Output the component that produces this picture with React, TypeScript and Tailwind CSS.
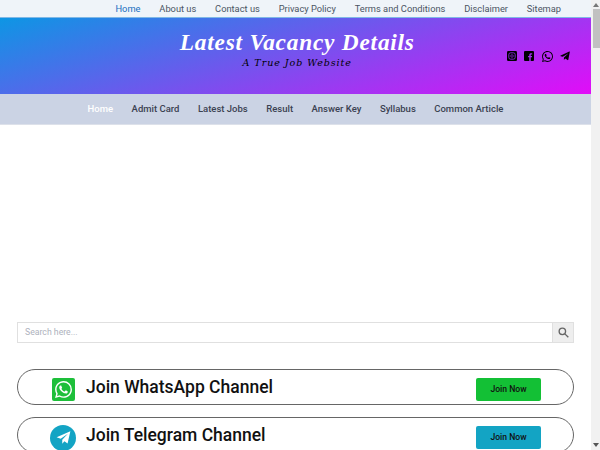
import React from "react";

const top = ["Home", "About us", "Contact us", "Privacy Policy", "Terms and Conditions", "Disclaimer", "Sitemap"];
const nav = ["Home", "Admit Card", "Latest Jobs", "Result", "Answer Key", "Syllabus", "Common Article"];

const WA = "M17.472 14.382c-.297-.149-1.758-.867-2.03-.967-.273-.099-.471-.148-.67.15-.197.297-.767.966-.94 1.164-.173.199-.347.223-.644.075-.297-.15-1.255-.463-2.39-1.475-.883-.788-1.48-1.761-1.653-2.059-.173-.297-.018-.458.13-.606.134-.133.298-.347.446-.52.149-.174.198-.298.298-.497.099-.198.05-.371-.025-.52-.075-.149-.669-1.612-.916-2.207-.242-.579-.487-.5-.669-.51-.173-.008-.371-.01-.57-.01-.198 0-.52.074-.792.372-.272.297-1.04 1.016-1.04 2.479 0 1.462 1.065 2.875 1.213 3.074.149.198 2.096 3.2 5.077 4.487.709.306 1.262.489 1.694.625.712.227 1.36.195 1.871.118.571-.085 1.758-.719 2.006-1.413.248-.694.248-1.289.173-1.413-.074-.124-.272-.198-.57-.347m-5.421 7.403h-.004a9.87 9.87 0 01-5.031-1.378l-.361-.214-3.741.982.998-3.648-.235-.374a9.86 9.86 0 01-1.51-5.26c.001-5.45 4.436-9.884 9.888-9.884 2.64 0 5.122 1.03 6.988 2.898a9.825 9.825 0 012.893 6.994c-.003 5.45-4.437 9.884-9.885 9.884m8.413-18.297A11.815 11.815 0 0012.05 0C5.495 0 .16 5.335.157 11.892c0 2.096.547 4.142 1.588 5.945L.057 24l6.305-1.654a11.882 11.882 0 005.683 1.448h.005c6.554 0 11.89-5.335 11.893-11.893a11.821 11.821 0 00-3.48-8.413z";

function Row({ label, color, icon }: { label: string; color: string; icon: React.ReactNode }) {
  return (
    <div className="flex items-center h-[36px] border border-[#666] rounded-[18px] pl-[32px] pr-[32px]">
      <div className="w-[26px] flex justify-center mr-[10px] mt-[5px]">{icon}</div>
      <div className="flex-1 text-[17.5px] font-medium text-[#111] leading-none mt-[1px]">{label}</div>
      <div className={`w-[65px] h-[23px] mt-[4px] rounded-[2px] flex items-center justify-center text-[8.6px] font-medium text-[#111] ${color}`}>Join Now</div>
    </div>
  );
}

export default function App() {
  return (
    <div className="flex h-[450px] overflow-hidden bg-white font-['Roboto',sans-serif]">
      <main className="flex-1 min-w-0">
        <div className="h-[18px] bg-[#eff4f9] border-b border-[#7fb8e6] flex justify-end items-center gap-[18.8px] pr-[30px] text-[9.3px] text-[#4b5563]">
          {top.map((t, i) => (
            <span key={t} className={i === 0 ? "text-[#1a6fc0]" : ""}>{t}</span>
          ))}
        </div>
        <header className="h-[76px] bg-[linear-gradient(163deg,#0d96e4,#e20cf8)] flex">
          <div className="flex-1 flex flex-col items-center pt-[11px] pl-[88px]">
            <div className="font-['Liberation_Serif',serif] font-bold italic text-[23.3px] leading-[26px] text-white tracking-[0.8px]">Latest Vacancy Details</div>
            <div className="font-['DejaVu_Serif',serif] italic text-[9.5px] leading-[12px] text-black mt-[2px] tracking-[0.95px]">A True Job Website</div>
          </div>
          <div className="flex items-center gap-[7.5px] pr-[21px] text-black">
            <svg width="10" height="10" viewBox="0 0 11 11"><rect width="11" height="11" rx="1.5" fill="#000" /><rect x="2" y="2" width="7" height="7" rx="2" fill="none" stroke="#8a2be2" strokeWidth="1" /><circle cx="5.5" cy="5.5" r="1.4" fill="none" stroke="#8a2be2" strokeWidth="0.8" /></svg>
            <svg width="10" height="10" viewBox="0 0 11 11"><rect width="11" height="11" rx="1.2" fill="#000" /><path d="M7.4 11V7h1.3l.2-1.500H7.400V4.600c0-.45.2-.75.8-.75h.8V2.500C8.700 2.450 8.300 2.400 7.800 2.400 6.600 2.400 5.800 3.100 5.800 4.400v1.100H4.500V7h1.300v4z" fill="#a52bf0" /></svg>
            <svg width="11" height="11" viewBox="0 0 24 24" fill="#000"><path d={WA} /></svg>
            <svg width="10" height="10" viewBox="0 0 24 24" fill="#000"><path d="M23.500 2.200 19.900 21c-.2 1-1 1.200-1.800.8l-5.300-3.900-2.600 2.500c-.3.3-.5.5-1 .5l.4-5.500 9.600-8.700c.4-.4-.1-.6-.6-.2L6.700 14 1.600 12.400c-1.100-.3-1.100-1.100.2-1.600L22.300 1c.9-.3 1.700.2 1.200 1.200z" /></svg>
          </div>
        </header>
        <nav className="h-[31px] bg-[#cbd3e4] border-b border-[#dde1ea] flex justify-center items-center gap-[18.5px] text-[9.5px] font-medium text-[#3b4252]">
          {nav.map((t, i) => (
            <span key={t} className={i === 0 ? "text-white" : ""}>{t}</span>
          ))}
        </nav>
        <section className="px-[17px] pt-[197px]">
          <div className="flex h-[21px] border border-[#e0e0e0]">
            <div className="flex-1 flex items-center pl-[7px] text-[8.7px] text-[#aeb2bd]">Search here...</div>
            <div className="w-[21px] bg-[#eeeeee] border-l border-[#e0e0e0] flex items-center justify-center">
              <svg width="11" height="11" viewBox="0 0 24 24" fill="none" stroke="#666" strokeWidth="3"><circle cx="9.500" cy="9.500" r="7" /><path d="m15 15 7.500 7.500" /></svg>
            </div>
          </div>
          <div className="mt-[26px] flex flex-col gap-[12px]">
            <Row
              label="Join WhatsApp Channel"
              color="bg-[#13c035]"
              icon={
                <div className="w-[23px] h-[23px] rounded-[2px] bg-[#1dbf3a] flex items-center justify-center">
                  <svg width="17" height="17" viewBox="0 0 24 24" fill="#fff"><path d={WA} /></svg>
                </div>
              }
            />
            <Row
              label="Join Telegram Channel"
              color="bg-[#13a4c4]"
              icon={
                <div className="w-[26px] h-[26px] shrink-0 rounded-full bg-[#13a4c4] flex items-center justify-center">
                  <svg width="15" height="15" viewBox="0 0 24 24"><path d="M23 2 1 11.500l6.500 2.500L19 6 10 15.500V22l3.500-4 5 3.500z" fill="#fff" /></svg>
                </div>
              }
            />
          </div>
        </section>
      </main>
      <aside className="w-[9px] bg-[#f1f1f1] flex flex-col items-center relative">
        <svg className="mt-[3px]" width="6" height="4" viewBox="0 0 6 4"><path d="M3 0 6 4H0z" fill="#777" /></svg>
        <div className="w-[7px] ml-[1px] mt-[2px] h-[39px] bg-[#c1c1c1]" />
        <div className="flex-1" />
        <svg className="mb-[3px]" width="6" height="4" viewBox="0 0 6 4"><path d="M3 4 6 0H0z" fill="#555" /></svg>
      </aside>
    </div>
  );
}
